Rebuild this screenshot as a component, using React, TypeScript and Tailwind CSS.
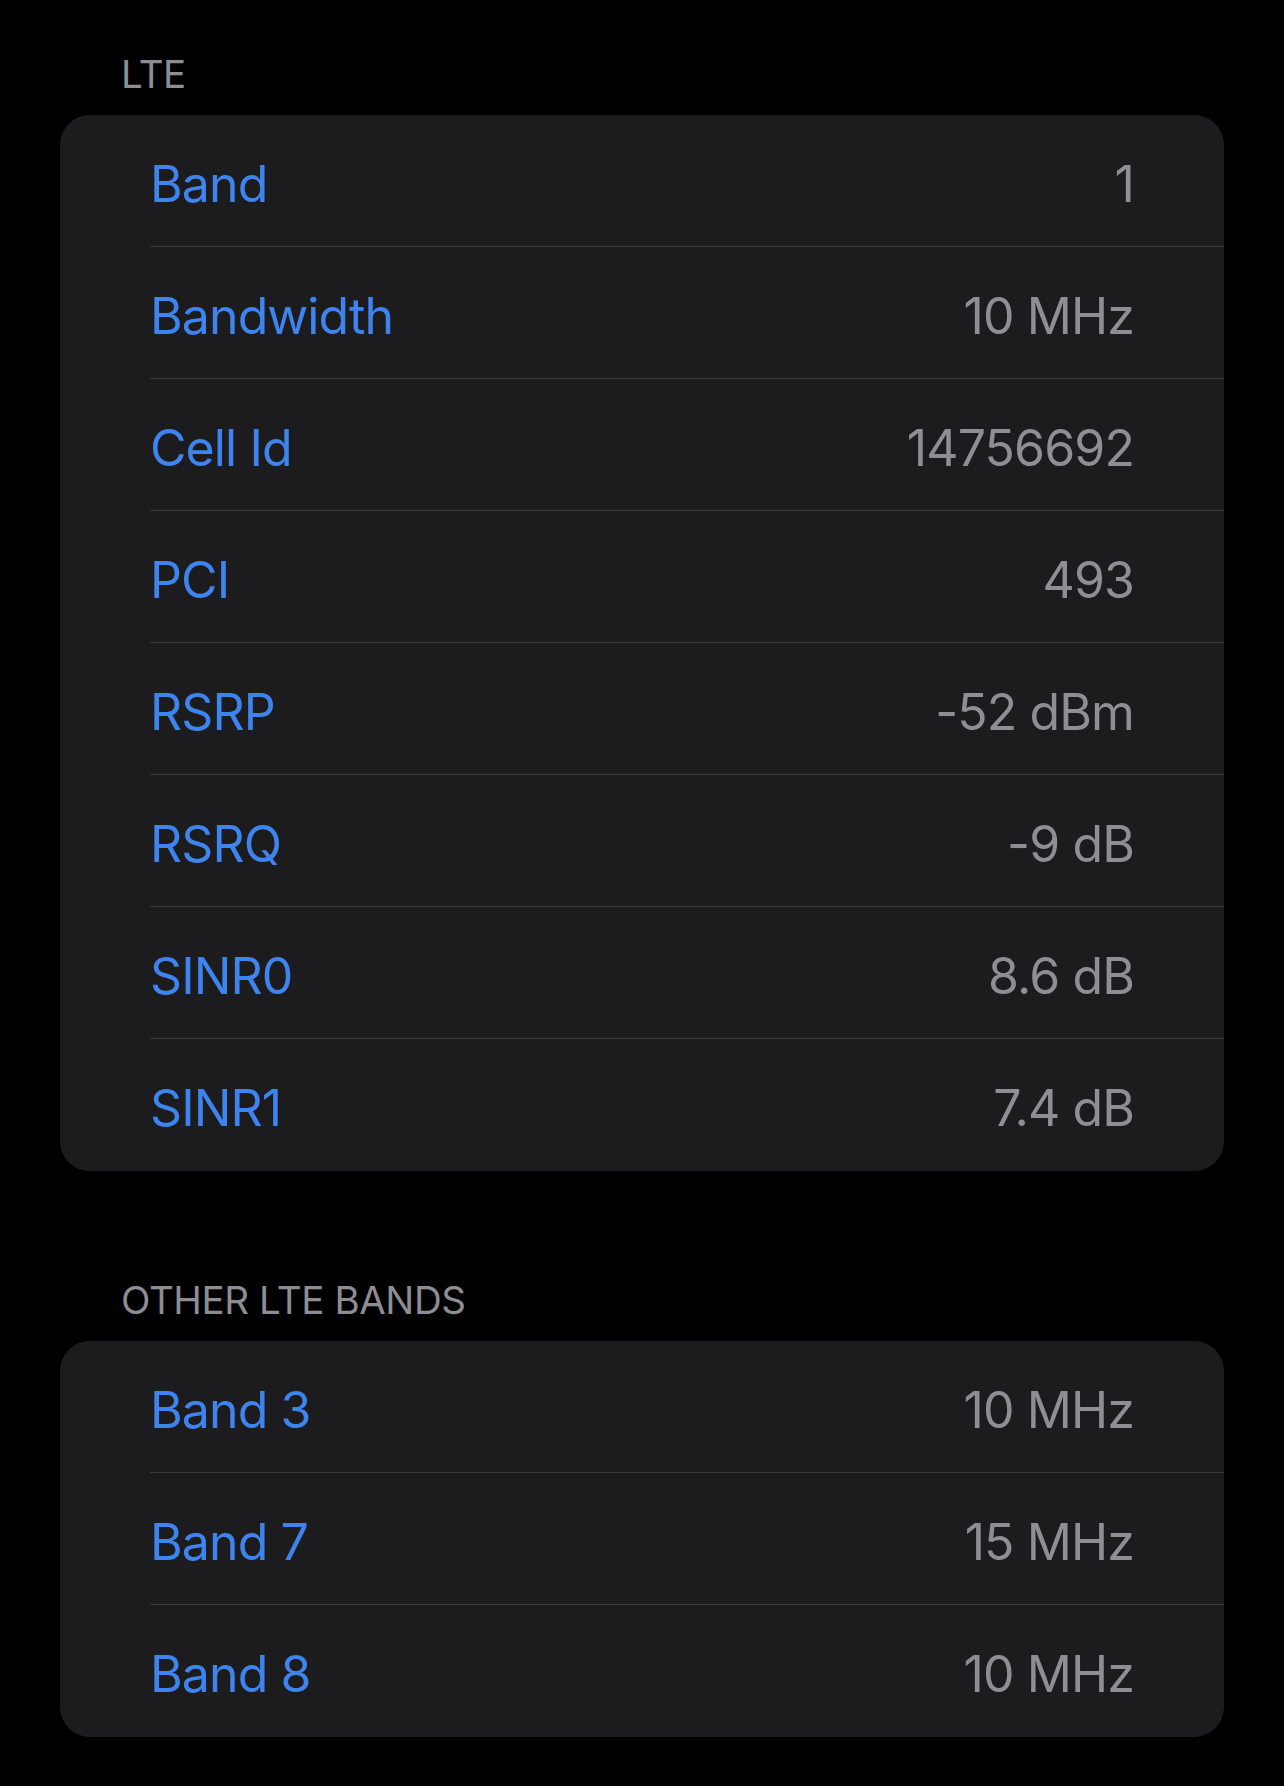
import React from "react";

type Row = { label: string; value: string };

const lte: Row[] = [
  { label: "Band", value: "1" },
  { label: "Bandwidth", value: "10 MHz" },
  { label: "Cell Id", value: "14756692" },
  { label: "PCI", value: "493" },
  { label: "RSRP", value: "-52 dBm" },
  { label: "RSRQ", value: "-9 dB" },
  { label: "SINR0", value: "8.6 dB" },
  { label: "SINR1", value: "7.4 dB" },
];

const otherBands: Row[] = [
  { label: "Band 3", value: "10 MHz" },
  { label: "Band 7", value: "15 MHz" },
  { label: "Band 8", value: "10 MHz" },
];

function Section({ title, rows }: { title: string; rows: Row[] }) {
  return (
    <section>
      {/* section header */}
      <h2 className="pl-[61px] h-[46px] leading-[46px] text-[38.5px] text-[#8d8d93] tracking-[-0.4px] mb-[18px]">
        {title}
      </h2>
      <div className="bg-[#1c1c1e] rounded-[30px] overflow-hidden">
        {rows.map((row, i) => (
          <div key={row.label} className="pl-[90px]">
            <div
              className={`h-[132px] flex items-center justify-between pr-[90px] pt-[7px] ${
                i < rows.length - 1 ? "border-b border-[#3a3a3c]" : ""
              }`}
            >
              <span className="text-[50px] tracking-[-0.9px] text-[#3d84ee]">
                {row.label}
              </span>
              <span className="text-[50px] tracking-[-0.9px] text-[#8e8e93]">
                {row.value}
              </span>
            </div>
          </div>
        ))}
      </div>
    </section>
  );
}

export default function App() {
  return (
    <main
      className="min-h-[1786px] w-[1284px] bg-black px-[60px] pt-[51px]"
      style={{ fontFamily: "Inter, 'Noto Sans', sans-serif" }}
    >
      <div className="flex flex-col gap-[106px]">
        <Section title="LTE" rows={lte} />
        <Section title="OTHER LTE BANDS" rows={otherBands} />
      </div>
    </main>
  );
}
